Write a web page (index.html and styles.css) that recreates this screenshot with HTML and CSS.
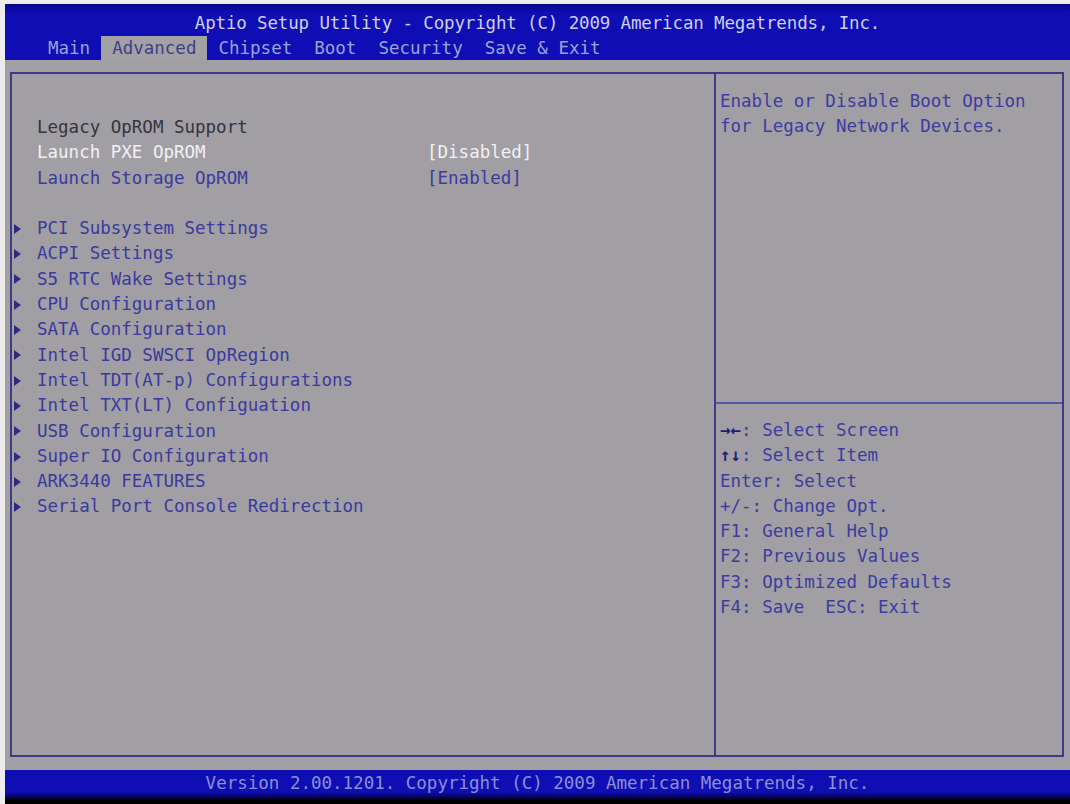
FILE: index.html
```html
<!DOCTYPE html>
<html lang="en">
<head>
  <meta charset="UTF-8" />
  <title>Aptio Setup Utility - Advanced</title>
  <link rel="stylesheet" href="styles.css">
</head>

<body>

  <div class="screen">

    <!-- title + tab strip -->
    <header class="top">
      <div class="title">Aptio Setup Utility - Copyright (C) 2009 American Megatrends, Inc.</div>
      <nav class="tabs">
        <span class="tab">Main</span>
        <span class="tab active">Advanced</span>
        <span class="tab">Chipset</span>
        <span class="tab">Boot</span>
        <span class="tab">Security</span>
        <span class="tab">Save &amp; Exit</span>
      </nav>
    </header>

    <main class="body">
      <div class="box">

        <!-- settings list -->
        <section class="left">
          <div class="row label">Legacy OpROM Support</div>
          <div class="row selected"><span class="name">Launch PXE OpROM</span><span class="value">[Disabled]</span></div>
          <div class="row option"><span class="name">Launch Storage OpROM</span><span class="value">[Enabled]</span></div>
          <div class="row blank"></div>
          <div class="row sub"><span class="arrow"></span>PCI Subsystem Settings</div>
          <div class="row sub"><span class="arrow"></span>ACPI Settings</div>
          <div class="row sub"><span class="arrow"></span>S5 RTC Wake Settings</div>
          <div class="row sub"><span class="arrow"></span>CPU Configuration</div>
          <div class="row sub"><span class="arrow"></span>SATA Configuration</div>
          <div class="row sub"><span class="arrow"></span>Intel IGD SWSCI OpRegion</div>
          <div class="row sub"><span class="arrow"></span>Intel TDT(AT-p) Configurations</div>
          <div class="row sub"><span class="arrow"></span>Intel TXT(LT) Configuation</div>
          <div class="row sub"><span class="arrow"></span>USB Configuration</div>
          <div class="row sub"><span class="arrow"></span>Super IO Configuration</div>
          <div class="row sub"><span class="arrow"></span>ARK3440 FEATURES</div>
          <div class="row sub"><span class="arrow"></span>Serial Port Console Redirection</div>
        </section>

        <!-- help panel -->
        <aside class="right">
          <div class="help">
            <div class="row">Enable or Disable Boot Option</div>
            <div class="row">for Legacy Network Devices.</div>
          </div>
          <div class="keys">
            <div class="row"><span class="key">→←</span>: Select Screen</div>
            <div class="row"><span class="key">↑↓</span>: Select Item</div>
            <div class="row">Enter: Select</div>
            <div class="row">+/-: Change Opt.</div>
            <div class="row">F1: General Help</div>
            <div class="row">F2: Previous Values</div>
            <div class="row">F3: Optimized Defaults</div>
            <div class="row">F4: Save&nbsp;&nbsp;ESC: Exit</div>
          </div>
        </aside>

      </div>
    </main>

    <footer class="foot">Version 2.00.1201. Copyright (C) 2009 American Megatrends, Inc.</footer>

  </div>

</body>
</html>
```

FILE: styles.css
```css
html, body {
  margin: 0;
  height: 100%;
}

body {
  background-color: #ececec;
  font-family: "DejaVu Sans Mono", "Liberation Mono", monospace;
  font-size: 17.5px;
  overflow: hidden;
}

.screen {
  margin: 4px 0 0 5px;
  height: 800px;
  display: flex;
  flex-direction: column;
  background-color: #a19fa4;
}

/* header */
.top {
  height: 56px;
  background: linear-gradient(#06068a 0, #0e0eb4 9px, #0e0eb4 100%);
}

.title {
  padding-top: 6px;
  line-height: 26px;
  text-align: center;
  color: #cfcff0;
  letter-spacing: -0.15px;
}

.tabs {
  display: flex;
  padding-left: 32px;
  height: 24px;
}

.tab {
  padding: 0 11px;
  line-height: 24px;
  color: #9ea2dc;
}

.tab.active {
  background-color: #a3a1a6;
  color: #3f3f86;
}

/* main area */
.body {
  height: 685px;
  padding: 12px 6px 13px 5px;
}

.box {
  height: 100%;
  box-sizing: border-box;
  border: 2px solid #3d3b86;
  display: grid;
  grid-template-columns: 702px 1fr;
}

.row {
  line-height: 25.3px;
  height: 25.3px;
  white-space: pre;
}

.left {
  padding: 41px 0 0 25px;
}

.left .row {
  display: flex;
  align-items: center;
}

.name {
  width: 390px;
}

.label {
  color: #34343f;
}

.selected {
  color: #f1f1f6;
}

.option, .sub {
  color: #3a3a9e;
}

.arrow {
  width: 0;
  height: 0;
  margin: 0 16px 0 -23px;
  border-left: 7px solid #2c2c86;
  border-top: 5px solid transparent;
  border-bottom: 5px solid transparent;
}

.right {
  border-left: 2px solid #3d3b86;
  display: flex;
  flex-direction: column;
  color: #3c3ca0;
}

.help {
  height: 330px;
  box-sizing: border-box;
  padding: 15px 0 0 4px;
  border-bottom: 2px solid #5756a0;
}

.keys {
  padding: 14px 0 0 4px;
}

.key {
  color: #1e1e80;
  font-weight: bold;
}

/* footer */
.foot {
  flex: 1;
  line-height: 26px;
  text-align: center;
  color: #8d8fd4;
  background: linear-gradient(#0e0eb4 0, #0e0eb4 22px, #05055a 27px, #000 30px);
}
```
